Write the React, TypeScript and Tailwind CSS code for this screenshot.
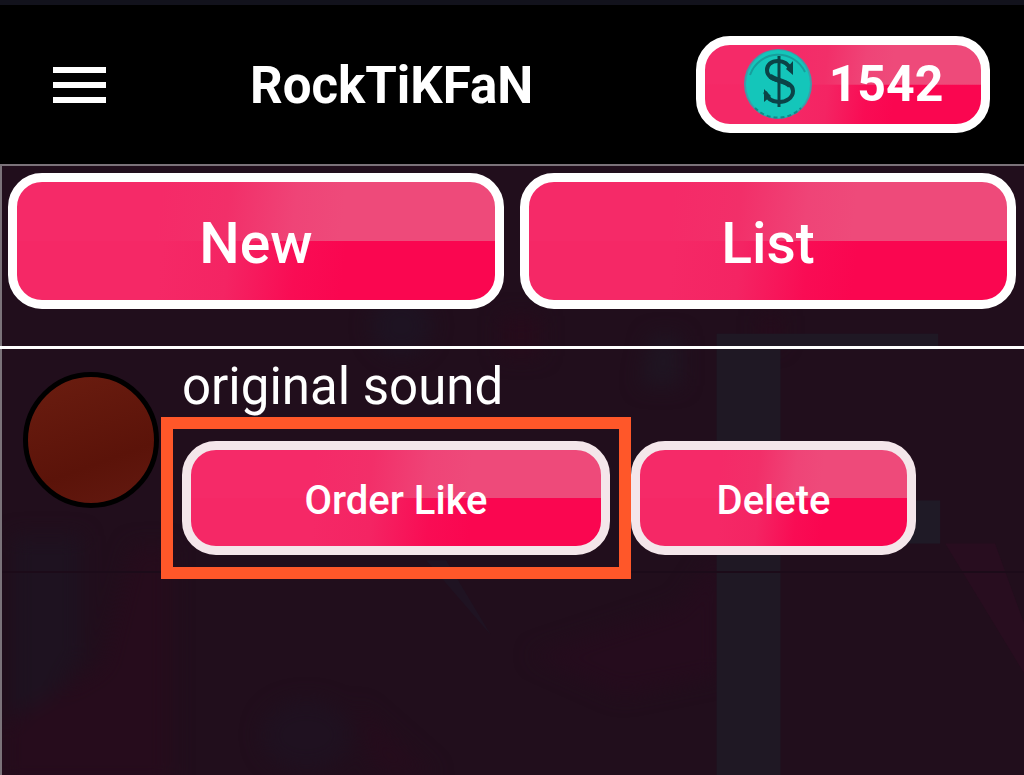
import type { ButtonHTMLAttributes } from 'react';
import { twMerge } from 'tailwind-merge';

interface Order {
  id: number;
  title: string;
}

const coins = 1542;

const orders: Order[] = [{ id: 1, title: 'original sound' }];

// Glossy pink button, the shine covers the upper right half
function GlossButton({ className, children, ...rest }: ButtonHTMLAttributes<HTMLButtonElement>) {
  return (
    <button
      type="button"
      className={twMerge(
        'flex items-center justify-center rounded-[34px] border-[9px] border-white bg-[#f52765] bg-[linear-gradient(97deg,#f52a68_30%,#f22f69_44%,#ef4477_58%,#ee4a7a_68%),linear-gradient(97deg,#f52866_30%,#f42463_44%,#f90c54_58%,#fa0650_68%)] bg-[length:100%_50%] bg-[position:top,bottom] bg-no-repeat pt-[6px] font-medium text-white',
        className
      )}
      {...rest}
    >
      {children}
    </button>
  );
}

function Coin() {
  return (
    <svg viewBox="0 0 70 72" className="h-[72px] w-[70px]" aria-hidden="true">
      <ellipse cx="35" cy="35" rx="34" ry="35" fill="#3d9ca8" />
      <ellipse cx="35" cy="35" rx="32" ry="34" fill="#14c6ba" />
      <path d="M7 26A30 31 0 0 1 62 23" fill="none" stroke="#179e9c" strokeWidth="2" />
      <path d="M12 59A33 34 0 0 0 58 59" fill="none" stroke="#128a88" strokeWidth="2" strokeDasharray="4 3" />
      {/* Dollar sign with serifs */}
      <g fill="none" stroke="#0b4347">
        <path d="M36 7v51" strokeWidth="3" />
        <path d="M48 21C45 14 41 12 35 12C28 12 24 16 24 21C24 35 50 29 50 42C50 49 43 53 36 53C29 53 24 49 22 43" strokeWidth="4" />
        <path d="M27 27C33 32 42 31 47 37" strokeWidth="5" />
      </g>
      <path d="M50 12v14l-7-6zM21 53V40l7 7z" fill="#0b4347" />
    </svg>
  );
}

// Dim artwork behind the list
function Backdrop() {
  return (
    <svg
      viewBox="0 0 1024 610"
      preserveAspectRatio="none"
      className="absolute inset-0 -z-10 h-full w-full"
      aria-hidden="true"
    >
      <defs>
        <filter id="soft" x="-20%" y="-20%" width="140%" height="140%" colorInterpolationFilters="sRGB">
          <feGaussianBlur stdDeviation="10" />
        </filter>
      </defs>
      <rect width="1024" height="610" fill="#210e1c" />
      <g filter="url(#soft)">
        <path d="M10 370h70v120l-40 60H10z" fill="#1e1220" />
        <path d="M130 380L100 500 0 560v60h170V380z" fill="#260c1c" />
        <ellipse cx="400" cy="160" rx="30" ry="30" fill="#1e1322" />
        <path d="M650 170h30v50h-40z" fill="#1f1522" />
        <path d="M720 380L680 440 530 490 620 530 720 510z" fill="#250c1d" />
        <ellipse cx="305" cy="570" rx="45" ry="35" fill="#1f1120" />
        <path d="M355 540l80 70h-60z" fill="#250c1c" />
        <path d="M500 150h40v40h-40zM760 150h20v30h-20z" fill="#260b1b" />
      </g>
      <path d="M945 378h50l29 80v50z" fill="#280d1f" />
      <path d="M425 395h20l45 75z" fill="#1f1322" />
      <path d="M716 168h222v16H780v426h-64z" fill="#1f1824" />
      <path d="M900 335h40v43h-40z" fill="#1f1a26" />
    </svg>
  );
}

export default function App() {
  return (
    <div className="flex min-h-screen flex-col bg-black font-[Roboto,sans-serif] text-white">
      <header className="flex h-[164px] items-center border-t-5 border-[#12121c] pr-[34px] pl-[53px]">
        <button type="button" aria-label="Menu" className="flex w-[53px] flex-col gap-[9px]">
          <span className="h-[6px] bg-white" />
          <span className="h-[6px] bg-white" />
          <span className="h-[6px] bg-white" />
        </button>
        <h1 className="ml-36 pt-0.5 text-[51px] leading-[60px] font-bold">RockTiKFaN</h1>
        <GlossButton className="ml-auto h-[97px] w-[294px] gap-4 pt-0 text-[50px] font-bold">
          <Coin />
          {coins}
        </GlossButton>
      </header>

      <main className="relative isolate flex-1 border-t-2 border-l-2 border-[#7b737a]">
        <Backdrop />

        <nav className="-ml-0.5 flex gap-4 border-b-3 border-white px-2 pt-[7px] pb-[37px]">
          <GlossButton className="h-[136px] flex-1 text-[57px]">New</GlossButton>
          <GlossButton className="h-[136px] flex-1 text-[57px]">List</GlossButton>
        </nav>

        <ul>
          {orders.map((order) => (
            <li key={order.id} className="flex items-start border-b-2 border-[#1c0b19] pl-[21px]">
              <div className="mt-[23px] h-[136px] w-[136px] rounded-full border-5 border-black bg-[linear-gradient(160deg,#6b1d10,#5b1309_65%,#631910)]" />
              <div className="ml-0.5">
                <p className="ml-[21px] pt-2 text-[51px] leading-[60px] whitespace-nowrap">{order.title}</p>
                <div className="-mb-2 flex">
                  {/* Highlighted action */}
                  <div className="border-12 border-[#ff5729] px-[9px] py-3">
                    <GlossButton className="h-[114px] w-[428px] border-[#f4e6ea] text-[40px]">Order Like</GlossButton>
                  </div>
                  <GlossButton className="mt-6 h-[114px] w-[285px] border-[#f4e6ea] text-[40px]">Delete</GlossButton>
                </div>
              </div>
            </li>
          ))}
        </ul>
      </main>
    </div>
  );
}
